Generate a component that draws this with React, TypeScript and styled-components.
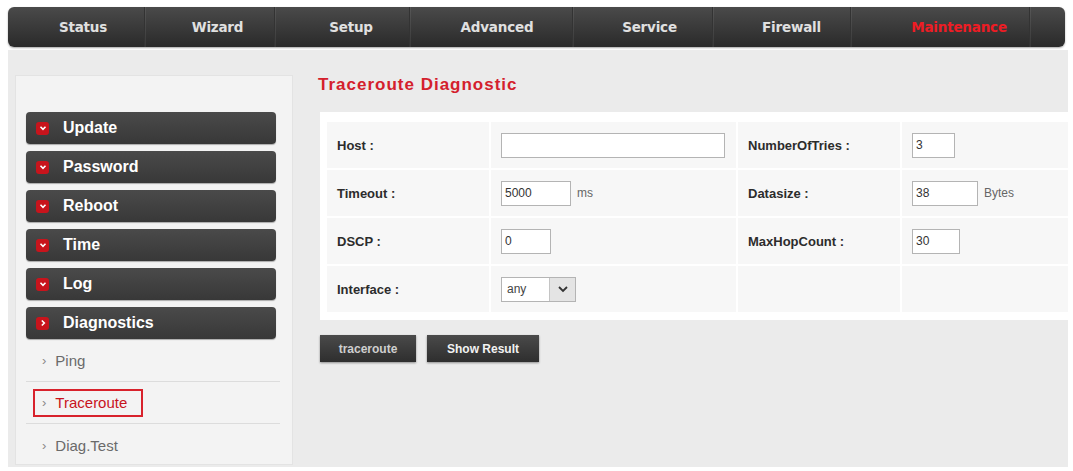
import styled, { createGlobalStyle } from "styled-components";

const GlobalStyle = createGlobalStyle`
    html, body {
        margin: 0;
        padding: 0;
        background: #ffffff;
    }
    * {
        box-sizing: border-box;
    }
`;

// 각 탭의 폭과 글자 들여쓰기
const NAV_ITEMS = [
    { label: "Status", width: 137, indent: 14 },
    { label: "Wizard", width: 130, indent: 16 },
    { label: "Setup", width: 135, indent: 18 },
    { label: "Advanced", width: 163, indent: 12 },
    { label: "Service", width: 140, indent: 14 },
    { label: "Firewall", width: 138, indent: 20 },
    { label: "Maintenance", width: 179, indent: 38, active: true },
];

const MENU = ["Update", "Password", "Reboot", "Time", "Log"];

const SUB_MENU = [
    { label: "Ping" },
    { label: "Traceroute", active: true },
    { label: "Diag.Test" },
];

const Chevron = ({ dir }: { dir: "down" | "right" }) => (
    <svg width="8" height="8" viewBox="0 0 8 8">
        {dir === "down" ? (
            <path d="M1.5 2.8 L4 5.3 L6.5 2.8" fill="none" stroke="#fff" strokeWidth="1.6" />
        ) : (
            <path d="M2.8 1.5 L5.3 4 L2.8 6.5" fill="none" stroke="#fff" strokeWidth="1.6" />
        )}
    </svg>
);

const App = () => {
    return (
        <Page>
            <GlobalStyle />
            <TopNav>
                {NAV_ITEMS.map((item) => (
                    <NavItem
                        key={item.label}
                        $width={item.width}
                        $indent={item.indent}
                        $active={!!item.active}
                    >
                        {item.label}
                    </NavItem>
                ))}
                <NavTail />
            </TopNav>

            <Body>
                <Sidebar>
                    {MENU.map((name) => (
                        <MenuButton key={name}>
                            <MenuIcon>
                                <Chevron dir="down" />
                            </MenuIcon>
                            {name}
                        </MenuButton>
                    ))}
                    <MenuButton>
                        <MenuIcon>
                            <Chevron dir="right" />
                        </MenuIcon>
                        Diagnostics
                    </MenuButton>
                    <SubList>
                        {SUB_MENU.map((sub) => (
                            <SubItem key={sub.label}>
                                <SubLink $active={!!sub.active}>
                                    <SubArrow>›</SubArrow>
                                    {sub.label}
                                </SubLink>
                            </SubItem>
                        ))}
                    </SubList>
                </Sidebar>

                <Content>
                    <Title>Traceroute Diagnostic</Title>
                    <FormPanel>
                        <LabelCell>Host :</LabelCell>
                        <FieldCell>
                            <TextInput $width={224} defaultValue="" />
                        </FieldCell>
                        <LabelCell>NumberOfTries :</LabelCell>
                        <FieldCell>
                            <TextInput $width={43} defaultValue="3" />
                        </FieldCell>

                        <LabelCell>Timeout :</LabelCell>
                        <FieldCell>
                            <TextInput $width={70} defaultValue="5000" />
                            <Unit>ms</Unit>
                        </FieldCell>
                        <LabelCell>Datasize :</LabelCell>
                        <FieldCell>
                            <TextInput $width={66} defaultValue="38" />
                            <Unit>Bytes</Unit>
                        </FieldCell>

                        <LabelCell>DSCP :</LabelCell>
                        <FieldCell>
                            <TextInput $width={50} defaultValue="0" />
                        </FieldCell>
                        <LabelCell>MaxHopCount :</LabelCell>
                        <FieldCell>
                            <TextInput $width={48} defaultValue="30" />
                        </FieldCell>

                        <LabelCell>Interface :</LabelCell>
                        <FieldCell>
                            <SelectBox>
                                <SelectValue>any</SelectValue>
                                <SelectButton>
                                    <svg width="12" height="8" viewBox="0 0 12 8">
                                        <path d="M2 2 L6 6 L10 2" fill="none" stroke="#333" strokeWidth="1.8" />
                                    </svg>
                                </SelectButton>
                            </SelectBox>
                        </FieldCell>
                        <LabelCell />
                        <FieldCell />
                    </FormPanel>

                    <ButtonRow>
                        <ActionButton $width={96} $muted>
                            traceroute
                        </ActionButton>
                        <ActionButton $width={112}>Show Result</ActionButton>
                    </ButtonRow>
                </Content>
            </Body>
        </Page>
    );
};

export default App;

// Styled Components
const Page = styled.div`
    width: 1073px;
    height: 471px;
    padding-top: 7px;
    background: #ffffff;
    font-family: "Liberation Sans", Arial, sans-serif;
`;

const TopNav = styled.div`
    display: flex;
    height: 40px;
    margin: 0 8px;
    border-radius: 6px;
    overflow: hidden;
    background: linear-gradient(#4a4a4a 0%, #3a3a3a 50%, #2a2a2a 100%);
    box-shadow: 0 1px 2px rgba(0, 0, 0, 0.35);
`;

const NavItem = styled.div<{ $width: number; $indent: number; $active: boolean }>`
    width: ${({ $width }) => $width}px;
    display: flex;
    align-items: center;
    justify-content: center;
    padding-left: ${({ $indent }) => $indent}px;
    font-family: "DejaVu Sans", Verdana, sans-serif;
    font-size: 13.5px;
    font-weight: bold;
    letter-spacing: -0.2px;
    color: ${({ $active }) => ($active ? "#ee1c24" : "#e0e0e0")};
    border-right: 1px solid #333333;
    box-shadow: 1px 0 0 rgba(255, 255, 255, 0.07);
`;

const NavTail = styled.div`
    flex: 1;
`;

const Body = styled.div`
    display: flex;
    height: 417px;
    margin: 3px 5px 0 8px;
    padding: 25px 0 0 7px;
    background: #ebebeb;
`;

const Sidebar = styled.div`
    width: 278px;
    height: 390px;
    padding: 36px 0 0 10px;
    background: #f3f3f3;
    border: 1px solid #e3e3e3;
    display: flex;
    flex-direction: column;
    gap: 7px;
    overflow: hidden;
`;

const MenuButton = styled.div`
    flex-shrink: 0;
    width: 250px;
    height: 32px;
    display: flex;
    align-items: center;
    gap: 14px;
    padding-left: 10px;
    border-radius: 4px;
    background: linear-gradient(#4a4a4a, #383838);
    box-shadow: 0 1px 1px rgba(0, 0, 0, 0.3);
    color: #ffffff;
    font-size: 16px;
    font-weight: bold;
`;

const MenuIcon = styled.span`
    width: 13px;
    height: 13px;
    border-radius: 3px;
    background: #c8141c;
    display: flex;
    align-items: center;
    justify-content: center;
`;

const SubList = styled.div`
    flex-shrink: 0;
    width: 254px;
    margin-top: -6px;
    display: flex;
    flex-direction: column;
`;

const SubItem = styled.div`
    height: 42px;
    display: flex;
    align-items: center;
    padding-left: 7px;
    border-bottom: 1px solid #dcdcdc;

    &:last-child {
        border-bottom: none;
    }
`;

const SubLink = styled.span<{ $active: boolean }>`
    display: flex;
    align-items: center;
    height: 28px;
    padding: 0 14px 0 7px;
    font-size: 15px;
    color: ${({ $active }) => ($active ? "#c8141c" : "#6a6a6a")};
    border: 2px solid ${({ $active }) => ($active ? "#d8222c" : "transparent")};
`;

const SubArrow = styled.span`
    color: #888888;
    font-size: 13px;
    margin-right: 9px;
`;

const Content = styled.div`
    flex: 1;
    margin-left: 25px;
`;

const Title = styled.h2`
    margin: 0 0 17px 0;
    height: 20px;
    line-height: 20px;
    font-size: 17px;
    font-weight: bold;
    letter-spacing: 1px;
    color: #d4202c;
`;

const FormPanel = styled.div`
    margin-left: 2px;
    height: 208px;
    padding: 10px 0 0 7px;
    background: #ffffff;
    display: grid;
    grid-template-columns: 162px 245px 162px 1fr;
    grid-auto-rows: 46px;
    gap: 2px;
`;

const LabelCell = styled.div`
    background: #f7f7f7;
    display: flex;
    align-items: center;
    padding-left: 10px;
    font-size: 13px;
    font-weight: bold;
    color: #2c2c2c;
`;

const FieldCell = styled.div`
    background: #f7f7f7;
    display: flex;
    align-items: center;
    gap: 6px;
    padding-left: 10px;
`;

const TextInput = styled.input<{ $width: number }>`
    width: ${({ $width }) => $width}px;
    height: 25px;
    padding: 0 3px;
    border: 1px solid #b4b4b4;
    background: #ffffff;
    font-family: "Liberation Sans", Arial, sans-serif;
    font-size: 12px;
    color: #333333;
    outline: none;
`;

const Unit = styled.span`
    font-size: 12px;
    color: #666666;
`;

const SelectBox = styled.div`
    width: 75px;
    height: 25px;
    display: flex;
    border: 1px solid #b4b4b4;
    background: #ffffff;
`;

const SelectValue = styled.span`
    flex: 1;
    display: flex;
    align-items: center;
    padding-left: 5px;
    font-size: 12px;
    color: #444444;
`;

const SelectButton = styled.span`
    width: 26px;
    display: flex;
    align-items: center;
    justify-content: center;
    background: #e4e4e4;
    border-left: 1px solid #c4c4c4;
`;

const ButtonRow = styled.div`
    display: flex;
    gap: 11px;
    margin: 15px 0 0 2px;
`;

const ActionButton = styled.div<{ $width: number; $muted?: boolean }>`
    width: ${({ $width }) => $width}px;
    height: 27px;
    display: flex;
    align-items: center;
    justify-content: center;
    background: linear-gradient(#4a4a4a, #2e2e2e);
    box-shadow: 0 1px 2px rgba(0, 0, 0, 0.4);
    font-size: 12px;
    font-weight: bold;
    color: ${({ $muted }) => ($muted ? "#cfcfcf" : "#f2f2f2")};
`;
